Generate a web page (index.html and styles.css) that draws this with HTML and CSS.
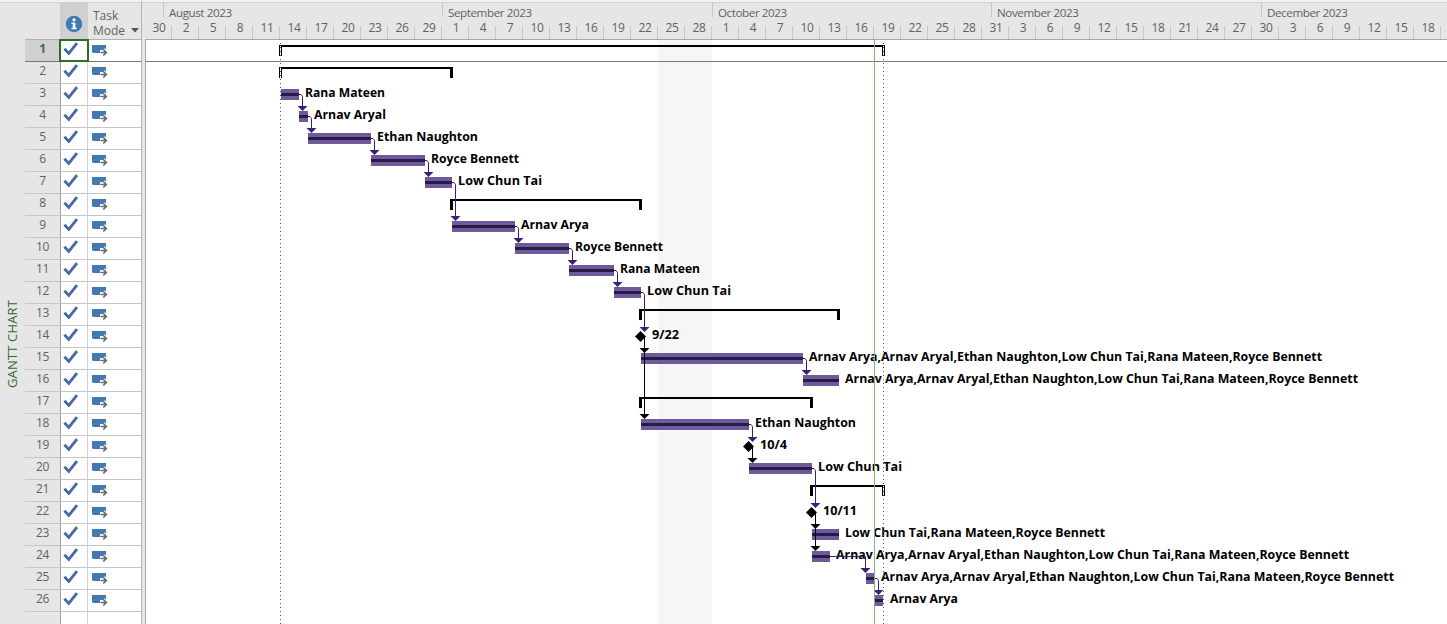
FILE: index.html
```html
<!DOCTYPE html>
<html lang="en">
<head>
<meta charset="utf-8">
<title>Gantt Chart</title>
<link rel="stylesheet" href="styles.css">
</head>
<body>
<svg class="defs" width="0" height="0" aria-hidden="true">
  <symbol id="check" viewBox="0 0 16 14"><path d="M1.4 6.8 5.8 11.4 14 1.2" fill="none" stroke="#4a68a8" stroke-width="2.9"/></symbol>
  <symbol id="auto" viewBox="0 0 17 13"><path d="M1 1h14v5H9v3H2L1 8z" fill="#4179b0"/><path d="M9 8.5h6M12.3 5.5l3 3-3 3" fill="none" stroke="#fff" stroke-width="3.4"/><path d="M9.5 8.500h6M12.300 5.500l3 3-3 3" fill="none" stroke="#6a6a6a" stroke-width="1.7"/></symbol>
</svg>
<div class="app">
  <aside class="view-name"><span>GANTT CHART</span></aside>
  <section class="table">
    <header class="table-head">
      <div class="corner"></div>
      <div class="info"><svg width="18" height="18" viewBox="0 0 18 18"><circle cx="9" cy="9" r="8.2" fill="#3f7ab2"/><circle cx="9" cy="4.800" r="1.6" fill="#fff"/><path d="M6.500 7.400h3.900v5.300h1.300v1.500H6.500v-1.500h1.300V8.900H6.500z" fill="#fff"/></svg></div>
      <div class="mode"><span>Task<br>Mode</span><svg width="8" height="5" viewBox="0 0 8 5"><path d="M0 0h8L4 4.500z" fill="#555"/></svg></div>
    </header>
    <div class="rows" id="rows"></div>
  </section>
  <div class="splitter"></div>
  <main class="chart">
    <header class="timescale">
      <div class="months" id="months"></div>
      <div class="days" id="days"></div>
    </header>
    <svg class="canvas" id="canvas" width="1302" height="584" viewBox="145 40 1302 584"></svg>
  </main>
</div>
<script src="chart.js"></script>
</body>
</html>
```

FILE: styles.css
```css
body { margin: 0; background: #fff; font-family: "Open Sans", "Noto Sans", sans-serif; font-size: 12px; color: #626262; }
.defs { display: block; height: 0; }
.app { display: flex; box-sizing: border-box; width: 1447px; height: 624px; overflow: hidden; background: #fff; }
.view-name, .table-head, .splitter, .timescale { box-sizing: border-box; border-top: 2px solid #f2f2f2; box-shadow: inset 0 1px #d2d2d2; }
.view-name { width: 25px; background: #e6e6e6; display: flex; justify-content: center; flex: none; }
.view-name span { writing-mode: vertical-rl; transform: rotate(180deg); margin-top: 298px; height: 88px; line-height: 25px; font-size: 13px; letter-spacing: .15px; font-weight: 500; color: #2f6b2f; white-space: nowrap; }
.table { width: 116px; flex: none; display: flex; flex-direction: column; }
.table-head { display: grid; grid-template-columns: 35px 28px 53px; height: 39px; background: #e6e6e6; }
.info { background: #d0d0d0; padding: 13px 0 0 5px; }
.mode { display: flex; padding: 6px 0 0 5px; line-height: 15px; }
.mode svg { margin: 20px 0 0 6px; }
.rows { flex: 1; background: linear-gradient(to right, #e6e6e6 35px, #a0a0a0 35px, #a0a0a0 36px, #fff 36px, #fff 62px, #d0d0d0 62px, #d0d0d0 63px, #fff 63px); }
.row { display: grid; grid-template-columns: 35px 28px 53px; height: 22px; box-sizing: border-box; border-bottom: 1px solid #c6c6c6; }
.row:first-child { height: 23px; border-top: 1px solid #b0b0b0; border-bottom-color: #777; }
.num { line-height: 18px; text-align: center; letter-spacing: -.4px; }
.row:first-child .num { background: #d0d0d0; color: #387038; font-weight: 700; }
.row svg { display: block; }
.tick { padding: 2px 0 0 3px; }
.row:first-child .tick { outline: 2px solid #2c6d24; outline-offset: -1px; background: #fff; }
.task-mode { padding: 4px 0 0 3px; }
.splitter { width: 5px; flex: none; background: #e6e6e6; border-left: 1px solid #b4b4b4; border-right: 1px solid #aaa; }
.chart { flex: 1; min-width: 0; margin-left: -1px; }
.timescale { height: 40px; border-bottom: 1px solid #a8a8a8; background: #e6e6e6; overflow: hidden; }
.months { display: flex; height: 17px; }
.month { flex: none; box-sizing: border-box; height: 15px; border-left: 1px solid #c8c8c8; padding-left: 5px; line-height: 21px; font-size: 11.6px; letter-spacing: -.4px; white-space: nowrap; }
.month:first-child { border-left: 0; }
.days { display: flex; height: 20px; }
.day { width: 27px; flex: none; text-align: center; line-height: 18px; letter-spacing: -.3px; box-sizing: border-box; padding-left: 1px; background: linear-gradient(#c8c8c8, #c8c8c8) right 7px / 1px 14px no-repeat; }
.canvas { display: block; }
.label { font: 700 13px "Open Sans", "Noto Sans", sans-serif; fill: #000; }
.bar { fill: #6f5b9c; }
.progress { fill: #2a1a48; }
.summary { fill: #000; }
.link { fill: none; stroke: #35207a; stroke-width: 1; }
.head { fill: #35207a; }
.link.dark { stroke: #000; }
.head.dark { fill: #000; }
```

FILE: chart.js
```js
const rows = document.getElementById('rows');
for (let i = 1; i <= 26; i++) {
  rows.insertAdjacentHTML('beforeend', `<div class="row"><div class="num">${i}</div><div class="tick"><svg width="16" height="14"><use href="#check"/></svg></div><div class="task-mode"><svg width="17" height="13"><use href="#auto"/></svg></div></div>`);
}

const months = [['', 18], ['August 2023', 279], ['September 2023', 270], ['October 2023', 279], ['November 2023', 270], ['December 2023', 186]];
document.getElementById('months').innerHTML = months.map(([t, w]) => `<div class="month" style="width:${w}px">${t}</div>`).join('');
const days = [30, 2, 5, 8, 11, 14, 17, 20, 23, 26, 29, 1, 4, 7, 10, 13, 16, 19, 22, 25, 28, 1, 4, 7, 10, 13, 16, 19, 22, 25, 28, 31, 3, 6, 9, 12, 15, 18, 21, 24, 27, 30, 3, 6, 9, 12, 15, 18, ''];
document.getElementById('days').innerHTML = days.map(d => `<div class="day">${d}</div>`).join('');

const top0 = n => 45 + 22 * (n - 1);
const team = 'Arnav Arya,Arnav Aryal,Ethan Naughton,Low Chun Tai,Rana Mateen,Royce Bennett';
// row, start, end, label, label width
const bars = [
  [3, 281, 299, 'Rana Mateen', 80], [4, 299, 308, 'Arnav Aryal', 72], [5, 308, 371, 'Ethan Naughton', 101],
  [6, 371, 425, 'Royce Bennett', 88], [7, 425, 452, 'Low Chun Tai', 84], [9, 452, 515, 'Arnav Arya', 68],
  [10, 515, 569, 'Royce Bennett', 88], [11, 569, 614, 'Rana Mateen', 80], [12, 614, 641, 'Low Chun Tai', 84],
  [15, 641, 803, team, 513], [16, 803, 839, team, 513], [18, 641, 749, 'Ethan Naughton', 101],
  [20, 749, 812, 'Low Chun Tai', 84], [23, 812, 839, 'Low Chun Tai,Rana Mateen,Royce Bennett', 260],
  [24, 812, 830, team, 513], [25, 866, 874, team, 513], [26, 875, 883, 'Arnav Arya', 68]
];
const summaries = [[1, 279, 885, 1, 1], [2, 279, 453, 1, 0], [8, 450, 642, 0, 0], [13, 639, 840, 0, 0], [17, 639, 813, 0, 0], [21, 810, 885, 0, 1]];
const milestones = [[14, 640.5, '9/22', 27], [19, 748.5, '10/4', 27], [22, 811.5, '10/11', 34]];
// source row, x of the source end, y of the arrow tip
const links = [[3, 299, 111], [4, 308, 133], [5, 371, 155], [6, 425, 177], [7, 452, 221], [9, 515, 243], [10, 569, 265], [11, 614, 287], [12, 641, 332], [15, 803, 375], [18, 749, 442], [20, 812, 508], [25, 875, 595]];

const text = (x, n, t, w) => `<text class="label" x="${x}" y="${top0(n) + 8}" textLength="${w}" lengthAdjust="spacingAndGlyphs">${t}</text>`;
const head = (x, y, c = '') => `<path class="head ${c}" d="M${x - 5} ${y - 5}h10l-4 4-1 1-1-1z"/>`;
let s = '<rect x="658" y="40" width="54" height="584" fill="#f6f6f6"/><rect x="145" y="61" width="1302" height="1" fill="#777"/>';

for (const [n, a, b, l, r] of summaries) {
  const y = top0(n);
  s += `<path class="summary" d="M${a} ${y}H${b}V${y + 11}h-3v-9H${a + 3}v9h-3z"/>`;
  if (l) s += `<rect x="${a + 1}" y="${y + 1}" width="1" height="10" fill="#fff"/>`;
  if (r) s += `<rect x="${b - 2}" y="${y + 1}" width="1" height="10" fill="#fff"/>`;
}
for (const [n, a, b] of bars) {
  s += `<rect class="bar" x="${a}" y="${top0(n)}" width="${b - a}" height="11"/><rect class="progress" x="${a}" y="${top0(n) + 4}" width="${b - a}" height="3"/>`;
}
for (const [n, x, t, w] of milestones) {
  const y = top0(n) + 5.5;
  s += `<path class="summary" d="M${x} ${y - 5.5}l5.5 5.5-5.5 5.5-5.5-5.5z"/>` + text(x + 11.5, n, t, w);
}
for (const [n, a, b, t, w] of bars) s += text(n === 25 ? 881 : n === 26 ? 890 : b + 6, n, t, w);
for (const [n, x, y] of links) {
  s += `<path class="link" d="M${x} ${top0(n) + 5.5}h2l1.5 2V${y - 4}"/>` + head(x + 3.5, y);
}
s += '<path class="link" d="M830 556.5h35.5V569"/>' + head(865.5, 573);
s += '<path class="link dark" d="M641 336.5h3.5V415M749 446.5h3.5V460M812 512.5h3.5V547"/>';
s += head(644.5, 353, 'dark') + head(644.5, 419, 'dark') + head(752.5, 463, 'dark') + head(815.5, 529, 'dark') + head(815.5, 551, 'dark');
s += '<path d="M280.5 43V624M883.5 43V624" stroke="#555" stroke-dasharray="1 3" fill="none"/><rect x="874" y="40" width="1" height="584" fill="#80b67c"/>';
document.getElementById('canvas').innerHTML = s;
```
